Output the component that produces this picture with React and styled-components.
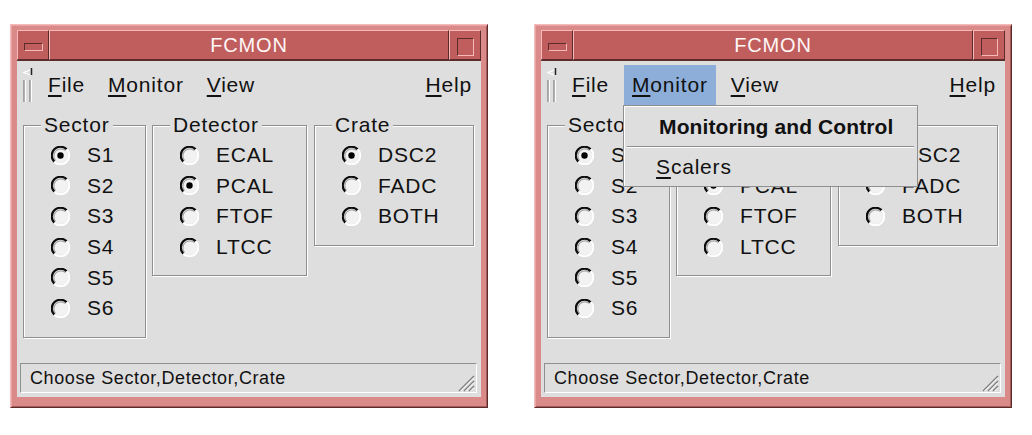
import React from 'react'
import styled, { createGlobalStyle } from 'styled-components'

const GlobalStyle = createGlobalStyle`
  html, body {
    margin: 0;
    padding: 0;
    background: #ffffff;
  }
  body {
    font-family: "Liberation Sans", Arial, sans-serif;
    color: #111;
  }
`

const FRAME = '#d98a89'
const FRAME_LIGHT = '#f4b9b8'
const FRAME_DARK = '#5e2b2b'
const TITLE = '#c05e5d'
const GRAY = '#dedede'
const ETCH = '#8f8f8f'

const groups = [
  { title: 'Sector', width: 123, items: ['S1', 'S2', 'S3', 'S4', 'S5', 'S6'], selected: 'S1' },
  { title: 'Detector', width: 155, items: ['ECAL', 'PCAL', 'FTOF', 'LTCC'], selected: 'PCAL' },
  { title: 'Crate', width: 160, items: ['DSC2', 'FADC', 'BOTH'], selected: 'DSC2' },
]

const Radio = ({ checked }) => (
  <svg width="19" height="19" viewBox="0 0 19 19">
    <circle cx="9.5" cy="9.5" r="7.6" fill="#f2f2f2" />
    <path d="M4.5 14.5 A7.1 7.1 0 0 1 14.5 4.5" fill="none" stroke="#a5a5a5" strokeWidth="1.2" />
    <path d="M3.3 15.7 A8.6 8.6 0 0 1 15.7 3.3" fill="none" stroke="#0c0c0c" strokeWidth="2.2" />
    <path d="M15.7 3.3 A8.6 8.6 0 0 1 3.3 15.7" fill="none" stroke="#ffffff" strokeWidth="2" />
    {checked && <circle cx="9.5" cy="9.5" r="3.2" fill="#000" />}
  </svg>
)

const Handle = () => (
  <svg width="12" height="36" viewBox="0 0 12 36">
    <path d="M8 3 L2 5.5 L8 8" fill="none" stroke="#ffffff" strokeWidth="1.3" />
    <line x1="9.5" y1="1" x2="9.5" y2="8" stroke="#222" strokeWidth="1.5" />
    <line x1="2" y1="13" x2="2" y2="35" stroke="#8a8a8a" strokeWidth="1.4" />
    <line x1="3.4" y1="13" x2="3.4" y2="35" stroke="#fff" strokeWidth="1.1" />
    <line x1="8" y1="13" x2="8" y2="35" stroke="#8a8a8a" strokeWidth="1.4" />
    <line x1="9.4" y1="13" x2="9.4" y2="35" stroke="#fff" strokeWidth="1.1" />
  </svg>
)

const Grip = () => (
  <svg width="20" height="18" viewBox="0 0 20 18">
    {[0, 5, 10].map((o) => (
      <g key={o}>
        <line x1={4 + o} y1="17" x2="19" y2={2 + o} stroke="#7e7e7e" strokeWidth="1.4" />
        <line x1={5.6 + o} y1="17" x2="19" y2={3.6 + o} stroke="#ffffff" strokeWidth="1" />
      </g>
    ))}
  </svg>
)

const App = () => (
  <>
    <GlobalStyle />
    <Page>
      <Window />
      <Window menuOpen />
    </Page>
  </>
)

const Window = ({ menuOpen }) => (
  <Frame>
    <TitleBar>
      <TitleButton>
        <MinGlyph />
      </TitleButton>
      <Title>FCMON</Title>
      <TitleButton>
        <MaxGlyph />
      </TitleButton>
    </TitleBar>
    <Body>
      <MenuBar>
        <Handle />
        <MenuButton>
          <u>F</u>ile
        </MenuButton>
        <MenuButton $active={menuOpen}>
          <u>M</u>onitor
          {menuOpen && (
            <Dropdown>
              <MenuTitle>Monitoring and Control</MenuTitle>
              <Separator />
              <MenuItem>
                <u>S</u>calers
              </MenuItem>
            </Dropdown>
          )}
        </MenuButton>
        <MenuButton>
          <u>V</u>iew
        </MenuButton>
        <MenuButton $right>
          <u>H</u>elp
        </MenuButton>
      </MenuBar>
      <Groups>
        {groups.map((g) => (
          <GroupBox key={g.title} $w={g.width}>
            <GroupLabel>{g.title}</GroupLabel>
            {g.items.map((item) => (
              <RadioRow key={item}>
                <Radio checked={item === g.selected} />
                <span>{item}</span>
              </RadioRow>
            ))}
          </GroupBox>
        ))}
      </Groups>
      <StatusBar>
        Choose Sector,Detector,Crate
        <GripSpot>
          <Grip />
        </GripSpot>
      </StatusBar>
    </Body>
  </Frame>
)

const Page = styled.div`
  display: flex;
  gap: 46px;
  padding: 24px 0 0 10px;
`

const Frame = styled.div`
  width: 478px;
  height: 384px;
  box-sizing: border-box;
  display: flex;
  flex-direction: column;
  background: ${FRAME};
  border: 1px solid;
  border-color: ${FRAME_LIGHT} ${FRAME_DARK} ${FRAME_DARK} ${FRAME_LIGHT};
  box-shadow: inset 1px 1px 0 #e9a3a2, inset -1px -1px 0 #a45a59;
  padding: 5px 6px 10px 6px;
`

const TitleBar = styled.div`
  display: flex;
  height: 30px;
  flex: none;
`

const TitleButton = styled.div`
  width: 32px;
  box-sizing: border-box;
  background: ${TITLE};
  border: 1px solid;
  border-color: ${FRAME_LIGHT} ${FRAME_DARK} ${FRAME_DARK} ${FRAME_LIGHT};
  display: flex;
  align-items: center;
  justify-content: center;
`

const MinGlyph = styled.div`
  width: 19px;
  height: 8px;
  box-sizing: border-box;
  border: 1px solid;
  border-color: ${FRAME_DARK} ${FRAME_LIGHT} ${FRAME_LIGHT} ${FRAME_DARK};
  margin-top: 3px;
`

const MaxGlyph = styled.div`
  width: 17px;
  height: 18px;
  box-sizing: border-box;
  border: 1px solid;
  border-color: ${FRAME_DARK} ${FRAME_LIGHT} ${FRAME_LIGHT} ${FRAME_DARK};
  margin-top: 4px;
`

const Title = styled.div`
  flex: 1;
  background: ${TITLE};
  border: 1px solid;
  border-color: ${FRAME_LIGHT} ${FRAME_DARK} ${FRAME_DARK} ${FRAME_LIGHT};
  color: #fff6f6;
  font-size: 20px;
  letter-spacing: 0.8px;
  line-height: 28px;
  text-align: center;
`

const Body = styled.div`
  flex: 1;
  display: flex;
  flex-direction: column;
  background: ${GRAY};
  border-top: 1px solid ${FRAME_DARK};
`

const MenuBar = styled.div`
  height: 50px;
  flex: none;
  display: flex;
  align-items: flex-start;
  padding: 4px 1px 0 5px;
  box-sizing: border-box;
  position: relative;
  z-index: 2;

  svg {
    margin-top: 2px;
    margin-right: 6px;
  }
`

const MenuButton = styled.div`
  position: relative;
  height: 40px;
  line-height: 40px;
  padding: 0 8px;
  margin-right: ${(p) => (p.$right ? '0' : '7px')};
  margin-left: ${(p) => (p.$right ? 'auto' : '0')};
  font-size: 21px;
  letter-spacing: 0.8px;
  background: ${(p) => (p.$active ? '#8caed9' : 'transparent')};
  white-space: nowrap;

  u {
    text-underline-offset: 3px;
  }
`

const Dropdown = styled.div`
  position: absolute;
  top: 40px;
  left: -1px;
  width: 295px;
  box-sizing: border-box;
  background: ${GRAY};
  border: 1px solid ${ETCH};
  box-shadow: inset 1px 1px 0 #fff;
  display: flex;
  flex-direction: column;
`

const MenuTitle = styled.div`
  height: 40px;
  line-height: 42px;
  padding-left: 35px;
  font-weight: bold;
  letter-spacing: 0.1px;
`

const Separator = styled.div`
  margin: 0 3px;
  border-top: 1px solid ${ETCH};
  border-bottom: 1px solid #fff;
`

const MenuItem = styled.div`
  height: 38px;
  line-height: 38px;
  padding-left: 32px;
  letter-spacing: 0.8px;
`

const Groups = styled.div`
  display: flex;
  align-items: flex-start;
  gap: 6px;
  margin-top: 14px;
  padding-left: 6px;

  & > :last-child {
    margin-left: 1px;
  }
`

const GroupBox = styled.div`
  position: relative;
  width: ${(p) => p.$w}px;
  box-sizing: border-box;
  border: 1px solid ${ETCH};
  box-shadow: inset 1px 1px 0 #fff, 1px 1px 0 #fff;
  padding: 14px 0 13px 28px;
`

const GroupLabel = styled.span`
  position: absolute;
  top: -13px;
  left: 17px;
  padding: 0 3px;
  background: ${GRAY};
  font-size: 21px;
  letter-spacing: 0.8px;
  line-height: 24px;
`

const RadioRow = styled.div`
  display: flex;
  align-items: center;
  gap: 17px;
  height: 30.6px;
  font-size: 21px;
  letter-spacing: 0.8px;

  svg {
    flex: none;
    margin-left: -1px;
  }
`

const StatusBar = styled.div`
  position: relative;
  margin: auto 4px 4px 3px;
  height: 30px;
  box-sizing: border-box;
  border: 1px solid;
  border-color: ${ETCH} #fff #fff ${ETCH};
  display: flex;
  align-items: center;
  padding-left: 9px;
  font-size: 18px;
  letter-spacing: 0.6px;
`

const GripSpot = styled.div`
  position: absolute;
  right: 1px;
  bottom: 0;
  line-height: 0;
`

export default App
